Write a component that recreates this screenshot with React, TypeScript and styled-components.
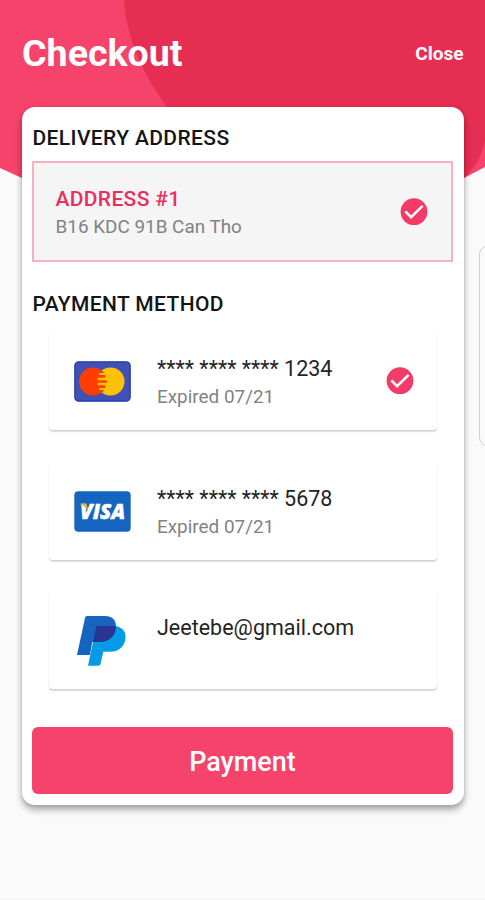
import React from "react";
import styled, { createGlobalStyle } from "styled-components";

const GlobalStyle = createGlobalStyle`
  * { box-sizing: border-box; }
  body {
    margin: 0;
    background: #fafafa;
    font-family: Roboto, "Liberation Sans", sans-serif;
  }
`;

const Screen = styled.main`
  position: relative;
  height: 900px;
  overflow: hidden;
  background: #fafafa;
  border-bottom: 1px solid #f2f2f2;
`;

const Backdrop = styled.svg`
  position: absolute;
  top: 0;
  left: 0;
  display: block;
`;

const SidePanel = styled.div`
  position: absolute;
  top: 246px;
  right: -20px;
  width: 26px;
  height: 200px;
  border: 1px solid #d2d2d2;
  border-radius: 8px;
  background: #fafafa;
`;

const Header = styled.header`
  position: relative;
  height: 107px;
  padding: 0 21.5px 0 22px;
  display: flex;
  align-items: center;
  justify-content: space-between;
  color: #fff;
`;

const Title = styled.h1`
  margin: 0 0 2px;
  font-size: 37.6px;
  line-height: 44px;
  font-weight: 700;
`;

const CloseButton = styled.button`
  border: 0;
  padding: 0;
  background: none;
  color: #fff;
  font: 700 19px/22px Roboto, sans-serif;
`;

const Card = styled.section`
  position: relative;
  width: 442.5px;
  height: 698px;
  margin-left: 21.5px;
  padding: 19px 11px 11px 10.5px;
  display: flex;
  flex-direction: column;
  border-radius: 13px;
  background: #fff;
  box-shadow: 0 5px 7px rgba(0, 0, 0, 0.3), 0 1px 5px rgba(0, 0, 0, 0.12);
`;

const SectionTitle = styled.h2`
  margin: 0;
  padding-left: 0.5px;
  font-size: 21px;
  line-height: 24px;
  font-weight: 500;
  letter-spacing: 0.38px;
  color: #151515;
`;

const AddressBox = styled.div`
  height: 101px;
  margin: 11px 0 30px;
  padding: 0 23px 0 21.5px;
  display: flex;
  align-items: center;
  justify-content: space-between;
  border: 2px solid #f5b2bd;
  background: #f5f5f5;
`;

const AddressText = styled.div`
  padding-top: 2px;
`;

const AddressName = styled.div`
  font-size: 21px;
  line-height: 28px;
  font-weight: 500;
  letter-spacing: 0.34px;
  color: #ea2e60;
`;

const Muted = styled.div`
  font-size: 18.9px;
  line-height: 28px;
  color: #828282;
`;

const Methods = styled.div`
  padding: 16px 16px 0 16.5px;
  display: flex;
  flex-direction: column;
  gap: 31.5px;
`;

const Method = styled.div`
  height: 98px;
  padding: 0 23.5px 0 25.5px;
  display: flex;
  align-items: center;
  border-radius: 4px;
  background: #fff;
  box-shadow: 0 1.5px 1.5px rgba(0, 0, 0, 0.13), 0 1px 1.5px rgba(0, 0, 0, 0.08);
`;

const LogoSlot = styled.div`
  width: 57px;
  margin-right: 26px;
  display: flex;
  justify-content: center;
`;

const MethodText = styled.div`
  flex: 1;
  height: 52px;
`;

const MethodName = styled.div`
  font-size: 21.5px;
  line-height: 28px;
  color: #242424;
`;

const PayButton = styled.button`
  margin-top: auto;
  height: 67px;
  padding: 3px 0 0;
  border: 0;
  border-radius: 6px;
  background: #f6436b;
  color: #fff;
  font: 500 27px/32px Roboto, sans-serif;
`;

const Icon = styled.svg`
  display: block;
  flex: none;
`;

const CheckIcon = () => (
  <Icon width="28" height="28" viewBox="0 0 28 28">
    <circle cx="14" cy="13.7" r="13.4" fill="#f33b67" />
    <path d="M5.3 13.4 11.1 19.2 22.6 7.9" fill="none" stroke="#fff" strokeWidth="2.6" />
  </Icon>
);

const MastercardLogo = () => (
  <Icon width="57" height="41" viewBox="0 0 57 41">
    <rect x="0.8" y="0.8" width="55.4" height="39.4" rx="4" fill="#3f51b5" stroke="#253da8" strokeWidth="1.2" />
    <circle cx="36.5" cy="20.5" r="14" fill="#ffc107" />
    <path d="M28 9.7A14 14 0 1 0 28 31.3 14 14 0 0 0 30.2 29H25v-2h6.3v-2.8H23.7v-2.4h9.1v-2.6h-9.1v-2.4h7.6V14H25v-2h5.2A14 14 0 0 0 28 9.7Z" fill="#ff3d00" />
  </Icon>
);

const VisaLogo = () => (
  <Icon width="57" height="42" viewBox="0 -1 57 42">
    <rect x="0.3" y="0.3" width="56.4" height="40.4" rx="4" fill="#1565c0" />
    <text
      x="6"
      y="28.2"
      fill="#fff"
      stroke="#fff"
      strokeWidth="0.5"
      fontFamily='"Open Sans", "Noto Sans", sans-serif'
      fontSize="21.5"
      fontWeight="800"
      fontStyle="italic"
      textLength="45"
      lengthAdjust="spacingAndGlyphs"
    >
      VISA
    </text>
    <path d="M5 12.8h6.1c1 0 1.7.6 1.9 1.5l1.2 6.1C12.6 17.2 9.7 14.2 5 12.8Z" fill="#f9b21d" />
  </Icon>
);

const PaypalLogo = () => (
  <Icon width="57" height="52" viewBox="0 -0.7 57 52">
    <path d="M13.2 1.3H31c8 0 12.5 5.4 10.5 13.3C39.7 23 34 27.4 25.4 27.4h-7.2L16 40.4H3L11 3.2Q11.4 1.3 13.2 1.3Z" fill="#1565c0" />
    <path d="M41.8 11.4c7.8 1.7 11 7 9.3 14.4C49.3 33 44 37 36.5 37h-7.2l-2.8 12.3q-.4 1.7-2 1.7H14l5.4-25.6Z" fill="#039be5" />
    <path d="M22.4 11.4h19.5c.7 8-5.3 16-16.5 16H19Z" fill="#283593" />
  </Icon>
);

const methods = [
  { name: "**** **** **** 1234", detail: "Expired 07/21", logo: <MastercardLogo />, selected: true },
  { name: "**** **** **** 5678", detail: "Expired 07/21", logo: <VisaLogo />, selected: false },
  { name: "Jeetebe@gmail.com", detail: "", logo: <PaypalLogo />, selected: false },
];

export default function App() {
  return (
    <>
      <GlobalStyle />
      <Screen>
        <Backdrop width="485" height="300" viewBox="0 0 485 300">
          <path d="M0 0H485V167L464 178L243 240L22 178L0 168Z" fill="#f6436b" />
          <path d="M124 0C127 40 143 74 167 107C215 175 270 208 340 212L464 178Q480 164 485 141V0Z" fill="#e62d52" />
        </Backdrop>
        <SidePanel />
        <Header>
          <Title>Checkout</Title>
          <CloseButton>Close</CloseButton>
        </Header>
        <Card>
          <SectionTitle>DELIVERY ADDRESS</SectionTitle>
          <AddressBox>
            <AddressText>
              <AddressName>ADDRESS #1</AddressName>
              <Muted>B16 KDC 91B Can Tho</Muted>
            </AddressText>
            <CheckIcon />
          </AddressBox>
          <SectionTitle>PAYMENT METHOD</SectionTitle>
          <Methods>
            {methods.map((m) => (
              <Method key={m.name}>
                <LogoSlot>{m.logo}</LogoSlot>
                <MethodText>
                  <MethodName>{m.name}</MethodName>
                  <Muted>{m.detail}</Muted>
                </MethodText>
                {m.selected && <CheckIcon />}
              </Method>
            ))}
          </Methods>
          <PayButton>Payment</PayButton>
        </Card>
      </Screen>
    </>
  );
}
